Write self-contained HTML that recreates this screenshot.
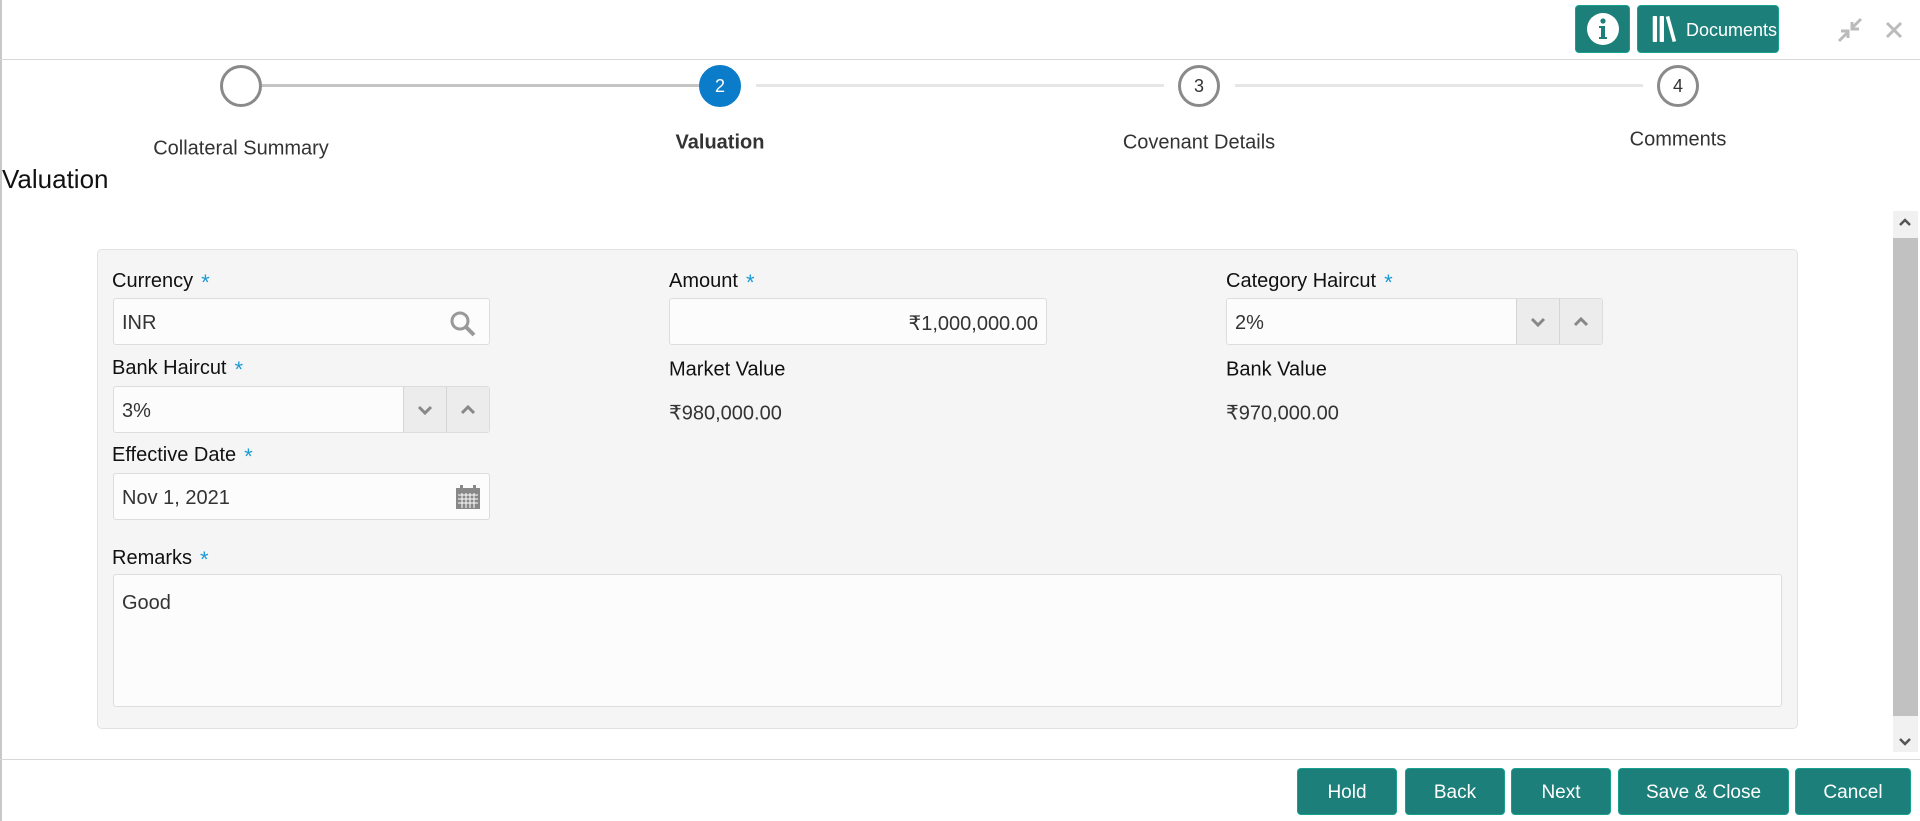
<!DOCTYPE html>
<html><head><meta charset="utf-8"><style>
*{box-sizing:border-box;margin:0;padding:0}
body{width:1920px;height:821px;background:#fff;font-family:"Liberation Sans",sans-serif;position:relative;overflow:hidden;color:#222}
.a{position:absolute}
svg{flex-shrink:0}
.btn{position:absolute;background:#1c7f79;border:1px solid #17a08f;border-radius:4px;color:#fff;font-size:19px;display:flex;align-items:center;justify-content:center;padding-top:2px}
.circ{position:absolute;width:42px;height:42px;border:3px solid #8a8a8a;border-radius:50%;background:#fff;display:flex;align-items:center;justify-content:center;font-size:18px;color:#333}
.lbl{position:absolute;font-size:20px;color:#111;transform:translateY(-50%);margin-top:3px}
.lbl b{color:#1a9ad6;font-weight:normal;margin-left:8px;font-size:22px;vertical-align:top}
.inp{position:absolute;background:#fcfcfc;border:1px solid #ddd;border-radius:3px;font-size:20px;color:#333;display:flex;align-items:center;padding:4px 8px 0}
.step{position:absolute;font-size:20px;color:#333;transform:translate(-50%,-50%);white-space:nowrap;margin-top:2px}
.sp{position:absolute;top:0;bottom:0;width:43px;background:#ececec;border-left:1px solid #d4d4d4;display:flex;align-items:center;justify-content:center}
.val{position:absolute;font-size:20px;color:#333;transform:translateY(-50%);margin-top:2px}
</style></head><body>
<div class="a" style="left:0;top:0;width:2px;height:821px;background:#c8c8c8"></div>
<div class="a" style="left:0;top:59px;width:1920px;height:1px;background:#d8d8d8"></div>
<div class="btn" style="left:1575px;top:5px;width:55px;height:48px;padding:0"><svg width="34" height="34" viewBox="0 0 34 34"><circle cx="17" cy="17" r="16" fill="#fff"/><circle cx="17" cy="9" r="2.6" fill="#1c7f79"/><path d="M13 14h6v11h2v2h-8v-2h2v-9h-2z" fill="#1c7f79"/></svg></div>
<div class="btn" style="left:1637px;top:5px;width:142px;height:48px;justify-content:flex-start;padding:0 0 0 13px;font-size:18px"><svg width="26" height="30" viewBox="0 0 30 34"><rect x="2" y="2" width="5" height="30" rx="1" fill="#fff"/><rect x="10" y="2" width="5" height="30" rx="1" fill="#fff"/><path d="M17 3l4-1 8 29-4 1z" fill="#fff"/></svg><span style="margin-left:9px;padding-top:3px;white-space:nowrap">Documents</span></div>
<svg class="a" style="left:1836px;top:16px" width="28" height="28" viewBox="0 0 28 28"><path d="M3 25l8-8M5 15h7v7M25 3l-8 8M16 6v7h7" stroke="#bbb" stroke-width="3" fill="none"/></svg>
<svg class="a" style="left:1884px;top:20px" width="20" height="20" viewBox="0 0 20 20"><path d="M3 3l14 14M17 3L3 17" stroke="#bbb" stroke-width="3"/></svg>
<div class="a" style="left:262px;top:84px;width:438px;height:3px;background:#c4c4c4"></div>
<div class="a" style="left:756px;top:84px;width:408px;height:3px;background:#e6e6e6"></div>
<div class="a" style="left:1235px;top:84px;width:408px;height:3px;background:#e6e6e6"></div>
<div class="circ" style="left:220px;top:65px"></div>
<div class="circ" style="left:699px;top:65px;background:#0a7cc9;border-color:#0a7cc9;color:#fff">2</div>
<div class="circ" style="left:1178px;top:65px">3</div>
<div class="circ" style="left:1657px;top:65px">4</div>
<div class="step" style="left:241px;top:147px">Collateral Summary</div>
<div class="step" style="left:720px;top:141px;font-weight:bold">Valuation</div>
<div class="step" style="left:1199px;top:141px">Covenant Details</div>
<div class="step" style="left:1678px;top:138px">Comments</div>
<div class="a" style="left:2px;top:164px;font-size:26px;color:#111">Valuation</div>
<div class="a" style="left:1893px;top:211px;width:25px;height:541px;background:#f1f1f1"></div>
<div class="a" style="left:1893px;top:238px;width:25px;height:478px;background:#c1c1c1"></div>
<svg class="a" style="left:1898px;top:216px" width="14" height="12"><path d="M2 9l5-5 5 5" stroke="#555" stroke-width="2.5" fill="none"/></svg>
<svg class="a" style="left:1898px;top:736px" width="14" height="12"><path d="M2 3l5 5 5-5" stroke="#555" stroke-width="2.5" fill="none"/></svg>
<div class="a" style="left:97px;top:249px;width:1701px;height:480px;background:#f5f5f5;border:1px solid #e2e2e2;border-radius:5px"></div>
<div class="lbl" style="left:112px;top:280px">Currency<b>*</b></div>
<div class="lbl" style="left:669px;top:280px">Amount<b>*</b></div>
<div class="lbl" style="left:1226px;top:280px">Category Haircut<b>*</b></div>
<div class="inp" style="left:113px;top:298px;width:377px;height:47px">INR<svg style="position:absolute;right:12px;top:11px" width="28" height="28" viewBox="0 0 28 28"><circle cx="11" cy="11" r="8" stroke="#999" stroke-width="3" fill="none"/><path d="M17 17l8 8" stroke="#999" stroke-width="4"/></svg></div>
<div class="inp" style="left:669px;top:298px;width:378px;height:47px;justify-content:flex-end">₹1,000,000.00</div>
<div class="inp" style="left:1226px;top:298px;width:377px;height:47px">2%<div class="sp" style="right:43px"><svg width="16" height="10"><path d="M2 2l6 6 6-6" stroke="#888" stroke-width="3" fill="none"/></svg></div><div class="sp" style="right:0"><svg width="16" height="10"><path d="M2 8l6-6 6 6" stroke="#888" stroke-width="3" fill="none"/></svg></div></div>
<div class="lbl" style="left:112px;top:367px">Bank Haircut<b>*</b></div>
<div class="lbl" style="left:669px;top:367px">Market Value</div>
<div class="lbl" style="left:1226px;top:367px">Bank Value</div>
<div class="inp" style="left:113px;top:386px;width:377px;height:47px">3%<div class="sp" style="right:43px"><svg width="16" height="10"><path d="M2 2l6 6 6-6" stroke="#888" stroke-width="3" fill="none"/></svg></div><div class="sp" style="right:0"><svg width="16" height="10"><path d="M2 8l6-6 6 6" stroke="#888" stroke-width="3" fill="none"/></svg></div></div>
<div class="val" style="left:669px;top:411px">₹980,000.00</div>
<div class="val" style="left:1226px;top:411px">₹970,000.00</div>
<div class="lbl" style="left:112px;top:454px">Effective Date<b>*</b></div>
<div class="inp" style="left:113px;top:473px;width:377px;height:47px">Nov 1, 2021<svg style="position:absolute;right:8px;top:11px" width="26" height="25" viewBox="0 0 26 25"><rect x="1" y="3" width="24" height="21" fill="#888"/><rect x="5" y="0" width="3" height="5" fill="#888"/><rect x="18" y="0" width="3" height="5" fill="#888"/><path d="M3 10h20M3 14h20M3 18h20M7 8v15M11 8v15M15 8v15M19 8v15" stroke="#fff" stroke-width="1"/></svg></div>
<div class="lbl" style="left:112px;top:557px">Remarks<b>*</b></div>
<div class="inp" style="left:113px;top:574px;width:1669px;height:133px;align-items:flex-start;padding-top:17px">Good</div>
<div class="a" style="left:0;top:759px;width:1920px;height:1px;background:#d8d8d8"></div>
<div class="btn" style="left:1297px;top:768px;width:100px;height:47px">Hold</div>
<div class="btn" style="left:1405px;top:768px;width:100px;height:47px">Back</div>
<div class="btn" style="left:1511px;top:768px;width:100px;height:47px">Next</div>
<div class="btn" style="left:1618px;top:768px;width:171px;height:47px">Save &amp; Close</div>
<div class="btn" style="left:1795px;top:768px;width:116px;height:47px">Cancel</div>
</body></html>
